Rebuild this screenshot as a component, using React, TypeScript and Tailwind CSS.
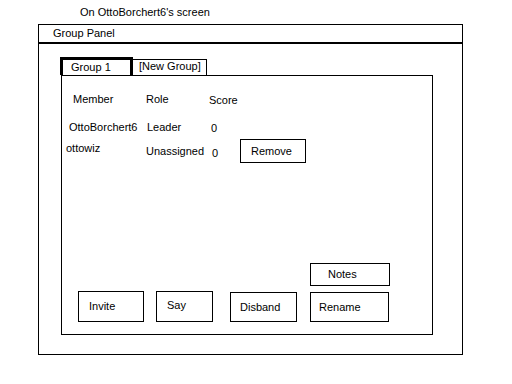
const font = { fontFamily: '"Liberation Sans", Arial, sans-serif' }

const Btn = ({ label, className }: { label: string; className: string }) => (
  <div className={`flex items-center border border-black bg-white text-[11px] leading-[13px] ${className}`}>
    {label}
  </div>
)

const App = () => {
  return (
    <div className="w-[512px] h-[384px] bg-white text-black text-[11px] leading-[13px]" style={font}>
      <div className="h-[24px] pl-[80px] pt-[6px]">On OttoBorchert6's screen</div>

      <div className="ml-[38px] w-[425px] h-[331px] border border-black">
        {/* title bar */}
        <div className="h-[19px] border-b-2 border-black pl-[14px] pt-[2px]">Group Panel</div>

        <div className="pl-[22px] pt-[13px]">
          {/* tabs */}
          <div className="flex items-end h-[18px]">
            <div className="w-[73px] h-[18px] -ml-px border-l-[3px] border-t-[3px] border-r-[3px] border-black pl-[8px] pt-px">
              Group 1
            </div>
            <div className="w-[74px] h-[16px] border-t border-r border-black pl-[6px]">[New Group]</div>
          </div>

          {/* panel */}
          <div className="flex flex-col w-[372px] h-[260px] border border-black">
            <div className="flex h-[13px] mt-[17px] pl-[11px]">
              <span className="w-[73px]">Member</span>
              <span className="w-[63px]">Role</span>
              <span className="mt-px">Score</span>
            </div>

            <div className="flex h-[13px] mt-[15px] pl-[7px]">
              <span className="w-[78px]">OttoBorchert6</span>
              <span className="w-[64px]">Leader</span>
              <span className="mt-px">0</span>
            </div>

            <div className="flex items-start h-[24px] mt-[5px] pl-[4px]">
              <span className="w-[80px] mt-[3px]">ottowiz</span>
              <span className="w-[66px] mt-[6px]">Unassigned</span>
              <span className="w-[28px] mt-[8px]">0</span>
              <Btn label="Remove" className="w-[66px] h-[24px] pl-[10px]" />
            </div>

            <div className="flex-1" />

            <div className="flex items-end pl-[16px] pb-[12px]">
              <Btn label="Invite" className="w-[66px] h-[31px] pl-[10px]" />
              <div className="ml-[12px] w-[57px] h-[31px] border border-black pl-[10px] pt-[7px]">Say</div>
              <Btn label="Disband" className="ml-[17px] w-[67px] h-[30px] pl-[9px]" />
              <div className="ml-[13px] flex flex-col gap-[6px]">
                <Btn label="Notes" className="w-[80px] h-[23px] pl-[17px]" />
                <Btn label="Rename" className="w-[79px] h-[30px] pl-[8px]" />
              </div>
            </div>
          </div>
        </div>
      </div>
    </div>
  )
}

export default App
